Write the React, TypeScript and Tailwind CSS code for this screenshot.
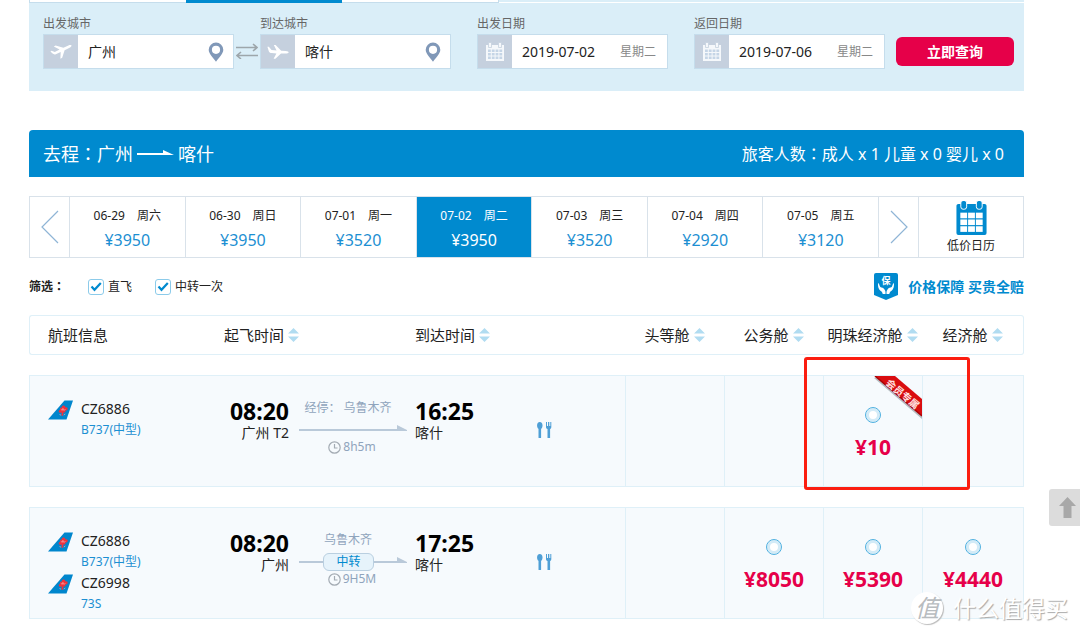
// src/pages/FlightResults.tsx
import React, { useState } from 'react';

interface Segment {
    flightNo: string;
    aircraft: string;
}

interface Flight {
    id: string;
    segments: Segment[];
    departTime: string;
    departPlace: string;
    arriveTime: string;
    arrivePlace: string;
    via: string;
    transfer: boolean;
    duration: string;
    prices: (number | null)[];
    memberOnly?: number;
}

const dates = [
    { date: '06-29', week: '周六', price: 3950 },
    { date: '06-30', week: '周日', price: 3950 },
    { date: '07-01', week: '周一', price: 3520 },
    { date: '07-02', week: '周二', price: 3950 },
    { date: '07-03', week: '周三', price: 3520 },
    { date: '07-04', week: '周四', price: 2920 },
    { date: '07-05', week: '周五', price: 3120 },
];

const cabins = ['头等舱', '公务舱', '明珠经济舱', '经济舱'];

const flights: Flight[] = [
    {
        id: 'f1',
        segments: [{ flightNo: 'CZ6886', aircraft: 'B737(中型)' }],
        departTime: '08:20',
        departPlace: '广州 T2',
        arriveTime: '16:25',
        arrivePlace: '喀什',
        via: '经停： 乌鲁木齐',
        transfer: false,
        duration: '8h5m',
        prices: [null, null, 10, null],
        memberOnly: 2,
    },
    {
        id: 'f2',
        segments: [
            { flightNo: 'CZ6886', aircraft: 'B737(中型)' },
            { flightNo: 'CZ6998', aircraft: '73S' },
        ],
        departTime: '08:20',
        departPlace: '广州',
        arriveTime: '17:25',
        arrivePlace: '喀什',
        via: '乌鲁木齐',
        transfer: true,
        duration: '9H5M',
        prices: [null, 8050, 5390, 4440],
    },
];

function TakeoffIcon() {
    return (
        <svg width="22" height="16" viewBox="0 0 22 16" fill="#fff">
            <path d="M0.4 7.400 L1.600 6.800 L4.800 7.900 L9.600 5.600 L3.800 2.400 L5.600 1.600 L13.400 3.800 L18.400 1.500 C20.400 0.700 21.800 1.200 21.500 2 C21.200 2.800 20 3.500 18.600 4.200 L14.600 6.200 L12.200 13.800 L10.400 14.800 L10.700 8 L5.800 10.200 C4.600 10.600 3.400 10.400 2.600 9.600 Z" />
        </svg>
    );
}

function LandingIcon() {
    return (
        <svg width="22" height="16" viewBox="0 0 22 16" fill="#fff">
            <path d="M0.4 2.800 L1.800 2.800 L4.600 6 L9.600 6.400 L6.800 1 L8.600 1 L14.200 6.700 L18.600 7 C20.800 7.100 21.800 7.700 21.600 8.400 C21.400 9.200 20.200 9.500 18.600 9.500 L14 9.500 L8.400 14.800 L6.600 14.800 L9.400 9.400 L4.800 9.100 C3 8.900 2.200 8.300 1.800 7.200 Z" />
        </svg>
    );
}

function CalendarIcon() {
    return (
        <svg width="20" height="20" viewBox="0 0 20 20">
            <path d="M1 3h18v16H1z" fill="#f5f8fb" />
            <path d="M3.500 0.500h3v5h-3zM13.500 0.500h3v5h-3z" fill="#f5f8fb" stroke="#c5d0de" strokeWidth="0.800" />
            <g fill="#c5d5e6">
                {[7.5, 11, 14.5].map(y =>
                    [3, 6.8, 10.6, 14.4].map(x => <rect key={`${x}-${y}`} x={x} y={y} width="2.800" height="2.500" />)
                )}
            </g>
        </svg>
    );
}

function LowPriceIcon() {
    return (
        <svg width="31" height="35" viewBox="0 0 31 35">
            <rect x="0" y="3" width="31" height="32" rx="2" fill="#008acf" />
            <rect x="4.500" y="-0.500" width="6" height="9" rx="2.500" fill="#008acf" stroke="#fff" />
            <rect x="20.500" y="-0.500" width="6" height="9" rx="2.500" fill="#008acf" stroke="#fff" />
            <g fill="#fff">
                {[12, 19, 26].map(y =>
                    [4, 12, 20].map(x => <rect key={`${x}-${y}`} x={x} y={y} width="7" height="5.800" />)
                )}
            </g>
        </svg>
    );
}

function PinIcon() {
    return (
        <svg width="16" height="20" viewBox="0 0 16 20">
            <path
                fillRule="evenodd"
                fill="#8098b8"
                d="M8 0.500a7.300 7.300 0 0 1 7.300 7.300c0 3.800-4 7.400-7.300 12-3.300-4.600-7.300-8.200-7.300-12A7.300 7.300 0 0 1 8 0.500zM8 3.700a4.100 4.100 0 1 0 0 8.200 4.100 4.100 0 0 0 0-8.200z"
            />
        </svg>
    );
}

function SwapIcon() {
    return (
        <svg width="22" height="16" viewBox="0 0 22 16" fill="none" stroke="#9da6ab" strokeWidth="1.600">
            <path d="M0 4.500h21M17 1l4 3.500-4 3.500M22 12.500H1M5 9l-4 3.500 4 3.500" />
        </svg>
    );
}

function TailLogo() {
    return (
        <svg width="25" height="20" viewBox="0 0 25 20">
            <path d="M0 19.500 16.500 0.500H25L18.500 19.500z" fill="#0086cd" />
            <path
                d="M15.200 5.500c1.500-.3 2.300.8 2.100 1.900 1.500-.6 2.700.5 2.300 1.800-.2 1-1.300 1.600-2.300 1.300.5 1 .1 1.800-.8 2l-1 .1-.5 3.200-1.500-.1.200-3.200c-1.200.7-2.600.4-2.900-.8-.2-1 .5-1.900 1.500-2-.7-1.200 0-2.300 1.400-2.100.1-1.200.6-1.900 1.500-2.100z"
                fill="#f0323c"
            />
            <path d="M12.800 9.300l1.500 1 .6-2 .8 2 1.800-.8M11.500 14.500l1.600.7M17.300 14l-1.500 1" stroke="#f9a7a7" strokeWidth="0.700" fill="none" />
        </svg>
    );
}

function MealIcon() {
    return (
        <svg width="15" height="16" viewBox="0 0 15 16" fill="#4e9fd6">
            <ellipse cx="2.800" cy="3.500" rx="2.700" ry="3.500" />
            <rect x="1.500" y="6" width="2.600" height="10" rx="0.500" />
            <path d="M9 0h1v4h1V0h1.300v4h1V0h1v5c0 1-.4 1.600-1.200 2v9h-2.600V7C9.400 6.600 9 6 9 5z" />
        </svg>
    );
}

function ClockIcon() {
    return (
        <svg width="13" height="13" viewBox="0 0 13 13" fill="none" stroke="#a3abb3">
            <circle cx="6.500" cy="6.500" r="5.700" strokeWidth="1.200" />
            <path d="M6.500 3v4h3" strokeWidth="1.200" />
        </svg>
    );
}

function ShieldIcon() {
    return (
        <svg width="24" height="27" viewBox="0 0 24 27">
            <path d="M2 0h20a2 2 0 0 1 2 2v20L12 27 0 22V2a2 2 0 0 1 2-2z" fill="#008acf" />
            <path
                d="M4.200 10c1 0 1.100 2.600 2.100 3.900l1 .6c1.200-.2 2.400.8 3.200 2 .6.900 1 1.500 1 2.500V21H8.700c-.1-1.600-1.200-2.400-2.300-3.200C4.400 16.300 3.500 12.500 4.200 10zM19.800 10c-1 0-1.100 2.600-2.100 3.900l-1 .6c-1.200-.2-2.400.8-3.200 2-.6.900-1 1.500-1 2.500V21h2.800c.1-1.600 1.200-2.400 2.300-3.200 2-1.500 2.900-5.300 2.200-7.800z"
                fill="#fff"
            />
            <text x="12" y="11" textAnchor="middle" fontSize="9" fill="#fff">保</text>
        </svg>
    );
}

function SortIcon() {
    return (
        <svg width="11" height="14" viewBox="0 0 11 14" fill="#b1dcf1">
            <path d="M5.500 0 11 5.500H0zM0 8.500h11L5.500 14z" />
        </svg>
    );
}

function MemberRibbon() {
    return (
        <svg className="absolute top-0 right-0" width="48" height="43" viewBox="0 0 48 43">
            <path d="M0 2 48 43V37L6 0z" fill="#b5bcc1" />
            <path d="M1 0h20l27 23v17z" fill="#d90d10" />
            <path d="M1 0 48 40" stroke="#a80406" strokeWidth="1.500" />
            <text x="11" y="8" fontSize="10" fontWeight="700" fill="#ffe1e1" transform="rotate(40 11 8)">会员专属</text>
        </svg>
    );
}

function RouteArrow() {
    return (
        <svg className="block" width="108" height="21" viewBox="0 0 108 21" fill="#b9c9d9">
            <path d="M0 12h98V8l10 5v1H0z" />
        </svg>
    );
}

// 居中的全角冒号
function Colon() {
    return <span className="font-['Noto_Sans_CJK_TC',sans-serif]">：</span>;
}

interface FieldProps {
    id: string;
    label: string;
    icon: React.ReactNode;
    value: string;
    suffix: React.ReactNode;
}

function SearchField({ id, label, icon, value, suffix }: FieldProps) {
    return (
        <div className="w-[191px]">
            <label htmlFor={id} className="block h-5 text-xs leading-5 text-[#666]">{label}</label>
            <div className="flex h-[35px] border border-[#c5ddec] bg-white">
                <span className="flex w-[34px] shrink-0 items-center justify-center bg-[#c5d0de]">{icon}</span>
                <input
                    id={id}
                    type="text"
                    defaultValue={value}
                    className="min-w-0 flex-1 pl-2.5 text-sm text-[#222] focus:outline-none"
                />
                <span className="flex shrink-0 items-center text-xs text-[#888]">{suffix}</span>
            </div>
        </div>
    );
}

function Filter({ label }: { label: string }) {
    return (
        <label className="flex items-center gap-1">
            <span className="relative flex">
                <input
                    type="checkbox"
                    defaultChecked
                    className="peer size-4 appearance-none rounded-[3px] border border-[#8ccbea] bg-white"
                />
                <svg className="pointer-events-none absolute inset-0 hidden peer-checked:block" width="16" height="16" viewBox="0 0 16 16">
                    <path d="M3.500 7.500 6.500 10.800 12.800 4" fill="none" stroke="#008acf" strokeWidth="2.200" />
                </svg>
            </span>
            {label}
        </label>
    );
}

function FlightRow({ flight }: { flight: Flight }) {
    return (
        <tr className="h-28 bg-[#f6fafd] align-top *:border-y *:border-[#dff0f8]">
            <td className="border-l pt-[22px] pl-[18px]">
                {flight.segments.map(s => (
                    <div key={s.flightNo} className="flex gap-2">
                        <span className="pt-0.5"><TailLogo /></span>
                        <div>
                            <div className="text-sm leading-[22px] text-[#222]">{s.flightNo}</div>
                            <a href="#" className="block text-xs leading-5 text-[#1c8fd2]">{s.aircraft}</a>
                        </div>
                    </div>
                ))}
            </td>
            <td className="pt-[23px] pr-2.5 text-right">
                <div className="text-[23px] leading-6 font-bold text-black">{flight.departTime}</div>
                <div className="text-sm leading-5 text-[#222]">{flight.departPlace}</div>
            </td>
            <td className="pt-[23px]">
                <div className="w-[98px] text-center text-xs leading-[18px] whitespace-nowrap text-[#8fa4bc]">{flight.via}</div>
                <div className="relative">
                    <RouteArrow />
                    {flight.transfer && (
                        <span className="absolute top-1 left-6 flex h-[18px] w-[51px] items-center justify-center rounded-md border border-[#b9cfe0] bg-[#e6f3fb] text-xs text-[#008acf]">
                            中转
                        </span>
                    )}
                </div>
                <div className="flex w-[106px] items-center justify-center gap-0.5 text-xs leading-[18px] text-[#8fa4bc]">
                    <ClockIcon />
                    {flight.duration}
                </div>
            </td>
            <td className="pt-[23px]">
                <div className="text-[23px] leading-6 font-bold text-black">{flight.arriveTime}</div>
                <div className="text-sm leading-5 text-[#222]">{flight.arrivePlace}</div>
            </td>
            <td className="pt-[46px] pl-2.5"><MealIcon /></td>
            {flight.prices.map((price, i) => (
                <td key={cabins[i]} className="relative border-l pt-[31px] text-center last:border-r">
                    {flight.memberOnly === i && <MemberRibbon />}
                    {price !== null && (
                        <label className="flex flex-col items-center gap-3 text-[21px] leading-6 font-bold text-[#e60049]">
                            <input
                                type="radio"
                                name="fare"
                                className="size-4 appearance-none rounded-full border border-[#4fb0e0] bg-white ring-3 ring-[#d3ebf7] ring-inset checked:bg-[#008acf]"
                            />
                            ¥{price}
                        </label>
                    )}
                </td>
            ))}
        </tr>
    );
}

function App() {
    const [selected, setSelected] = useState('07-02');

    return (
        <div className="relative min-h-screen overflow-hidden bg-white pr-14 pl-[29px] font-['Noto_Sans','Noto_Sans_CJK_SC',sans-serif]">
            {/* 查询条件 */}
            <div className="flex h-[3px] bg-[#daeef8]">
                <div className="w-[157px] border-b border-l border-[#c5ddec] bg-white" />
                <div className="w-[156px] bg-[#008acf]" />
                <div className="w-[157px] border-r border-b border-[#c5ddec] bg-white" />
                <div className="flex-1 border-b border-white" />
            </div>
            <form className="flex h-[88px] items-start bg-[#daeef8] pt-[11px] pr-2.5 pl-3.5" onSubmit={e => e.preventDefault()}>
                <SearchField id="from" label="出发城市" icon={<TakeoffIcon />} value="广州" suffix={<span className="pr-[9px]"><PinIcon /></span>} />
                <button type="button" aria-label="交换城市" className="mt-[29px] w-[26px] pl-0.5"><SwapIcon /></button>
                <SearchField id="to" label="到达城市" icon={<LandingIcon />} value="喀什" suffix={<span className="pr-[9px]"><PinIcon /></span>} />
                <div className="ml-[26px] flex gap-[26px]">
                    <SearchField id="depart" label="出发日期" icon={<CalendarIcon />} value="2019-07-02" suffix={<span className="pr-[11px]">星期二</span>} />
                    <SearchField id="return" label="返回日期" icon={<CalendarIcon />} value="2019-07-06" suffix={<span className="pr-[11px]">星期二</span>} />
                </div>
                <button type="submit" className="mt-[23px] ml-[11px] h-[29px] flex-1 rounded-md bg-[#e60049] text-sm font-bold text-white">
                    立即查询
                </button>
            </form>

            {/* 航程标题 */}
            <div className="mt-[39px] flex h-[47px] items-center justify-between rounded-t-[4px] bg-[#008acf] pr-5 pl-3.5 text-white">
                <h1 className="flex items-center gap-1 text-lg">
                    <span>去程<Colon />广州</span>
                    <svg width="37" height="8" viewBox="0 0 37 8" fill="#fff">
                        <path d="M0 3h26V0l11 5H0z" />
                    </svg>
                    喀什
                </h1>
                <p className="text-base">旅客人数<Colon />成人 x 1 儿童 x 0 婴儿 x 0</p>
            </div>

            {/* 日期价格 */}
            <div className="mt-[19px] flex h-[62px] border border-[#d9e2ea]">
                <button aria-label="前一天" className="flex w-10 items-center justify-center border-r border-[#d9e2ea]">
                    <svg width="18" height="34" viewBox="0 0 18 34" fill="none" stroke="#8fb5d6" strokeWidth="1.200">
                        <path d="M17 1 1 17l16 16" />
                    </svg>
                </button>
                {dates.map(d => (
                    <button
                        key={d.date}
                        onClick={() => setSelected(d.date)}
                        className={`flex flex-1 flex-col items-center gap-0.5 border-r border-[#d9e2ea] pt-[9px] ${
                            selected === d.date ? 'bg-[#008acf] text-white' : 'text-[#1c8fd2]'
                        }`}
                    >
                        <span className={`flex gap-3 text-xs leading-5 ${selected === d.date ? 'text-white' : 'text-[#222]'}`}>
                            <span>{d.date}</span>
                            <span>{d.week}</span>
                        </span>
                        <span className="text-base leading-6">¥{d.price}</span>
                    </button>
                ))}
                <button aria-label="后一天" className="flex w-10 items-center justify-center border-r border-[#d9e2ea]">
                    <svg width="18" height="34" viewBox="0 0 18 34" fill="none" stroke="#8fb5d6" strokeWidth="1.200">
                        <path d="M1 1l16 16L1 33" />
                    </svg>
                </button>
                <button className="flex w-[104px] flex-col items-center pt-1 text-xs leading-[22px] text-[#222]">
                    <LowPriceIcon />
                    低价日历
                </button>
            </div>

            {/* 筛选 */}
            <div className="flex h-[57px] items-center justify-between">
                <div className="flex items-center gap-[23px] text-xs text-[#222]">
                    <span className="font-bold">筛选<Colon /></span>
                    <Filter label="直飞" />
                    <Filter label="中转一次" />
                </div>
                <a href="#" className="relative z-10 flex items-center gap-2.5 text-sm font-bold text-[#008acf]">
                    <ShieldIcon />
                    价格保障 买贵全赔
                </a>
            </div>

            {/* 航班列表 */}
            <table className="-mt-5 w-full table-fixed border-separate border-spacing-x-0 border-spacing-y-5">
                <colgroup>
                    <col />
                    <col className="w-[75px]" />
                    <col className="w-[116px]" />
                    <col className="w-28" />
                    <col className="w-[98px]" />
                    <col className="w-[99px]" />
                    <col className="w-[99px]" />
                    <col className="w-[99px]" />
                    <col className="w-[102px]" />
                </colgroup>
                <thead>
                    <tr className="h-10 text-left text-[15px] whitespace-nowrap text-[#222] *:border-y *:border-[#dff0f8] *:font-normal">
                        <th className="rounded-l-[3px] border-l pl-[18px]">航班信息</th>
                        <th>
                            <button className="flex items-center gap-1">起飞时间<SortIcon /></button>
                        </th>
                        <th />
                        <th>
                            <button className="flex items-center gap-1">到达时间<SortIcon /></button>
                        </th>
                        <th />
                        {cabins.map(c => (
                            <th key={c} className="last:rounded-r-[3px] last:border-r">
                                <button className="mx-auto flex items-center gap-1">{c}<SortIcon /></button>
                            </th>
                        ))}
                    </tr>
                </thead>
                <tbody>
                    {flights.map(f => <FlightRow key={f.id} flight={f} />)}
                </tbody>
            </table>

            {/* 标注框 */}
            <div className="pointer-events-none absolute top-[357px] right-[110px] h-[133px] w-[166px] rounded-[3px] border-3 border-[#fb1d10]" />

            {/* 返回顶部 */}
            <button aria-label="返回顶部" className="absolute top-[489px] right-0 flex h-[37px] w-[31px] items-center justify-center rounded-l-[3px] bg-[#dcdcdc] pl-1.5">
                <svg width="17" height="21" viewBox="0 0 17 21" fill="#a8a8a8">
                    <path d="M8.500 0 17 9h-4.500v12h-8V9H0z" />
                </svg>
            </button>

            {/* 水印 */}
            <div className="pointer-events-none absolute top-[592px] right-3 flex items-center gap-2.5 text-[23px] leading-8 text-white [text-shadow:1px_1px_1px_#a8a8a8]">
                <span className="flex size-8 items-center justify-center rounded-full bg-white text-2xl leading-8 text-[#b8bcbf] italic shadow-[1px_1px_1px_#bbb] [text-shadow:none]">
                    值
                </span>
                什么值得买
            </div>
        </div>
    );
}

export default App;
